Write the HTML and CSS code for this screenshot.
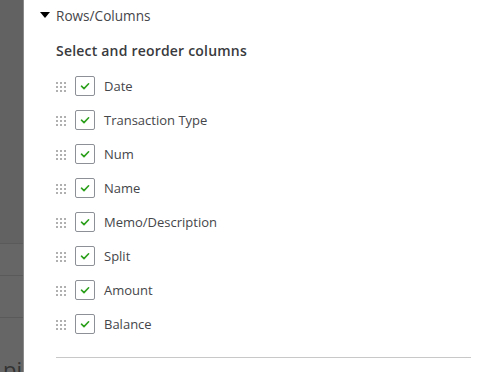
FILE: index.html
```html
<!DOCTYPE html>
<html lang="en">
<head>
    <meta charset="UTF-8">
    <title>Customize report - Rows/Columns</title>
    <link rel="stylesheet" href="styles.css">
</head>
<body>

<!-- Dimmed page behind the drawer -->
<div class="backdrop">
    <div class="backdrop-row top"></div>
    <div class="backdrop-row"></div>
    <div class="backdrop-row"></div>
    <div class="backdrop-row last"><span class="backdrop-text">pi</span></div>
</div>

<!-- Drawer -->
<div class="drawer">
    <div class="section-toggle">
        <span class="caret"></span>
        <span>Rows/Columns</span>
    </div>

    <h3 class="section-title">Select and reorder columns</h3>

    <ul class="column-list" id="column-list"></ul>

    <hr class="divider">
</div>

<script>
// Columns shown in the report
const columns = ['Date', 'Transaction Type', 'Num', 'Name', 'Memo/Description', 'Split', 'Amount', 'Balance'];

const list = document.getElementById('column-list');
columns.forEach(name => {
    const item = document.createElement('li');
    item.className = 'column-item';
    item.innerHTML = `
        <span class="drag-handle"><i></i><i></i><i></i><i></i><i></i><i></i><i></i><i></i><i></i></span>
        <span class="checkbox">
            <svg width="12" height="10" viewBox="0 0 12 10"><path d="M2.5 5.2 L5 7.6 L9.6 2.8" fill="none" stroke="#2ca01c" stroke-width="1.6" stroke-linecap="round" stroke-linejoin="round"/></svg>
        </span>
        <span class="column-name">${name}</span>
    `;
    list.appendChild(item);
});
</script>

</body>
</html>
```

FILE: styles.css
```css
body {
    margin: 0;
    padding: 0;
    font-family: 'Open Sans', sans-serif;
    color: #45464a;
    display: flex;
    height: 372px;
    overflow: hidden;
    background-color: white;
}

/* Dimmed page on the left */
.backdrop {
    width: 23px;
    flex-shrink: 0;
    background-color: #666666;
    display: flex;
    flex-direction: column;
    border-right: 1px solid #8a8a8a;
}

.backdrop-row {
    height: 31px;
    border-bottom: 1px solid #5a5a5a;
}

.backdrop-row.top {
    height: 243px;
    background-color: #626262;
}

.backdrop-row:nth-child(3) {
    height: 41px;
}

.backdrop-row.last {
    height: auto;
    flex: 1;
    border-bottom: none;
    padding-top: 40px;
    overflow: hidden;
}

.backdrop-text {
    font-size: 22px;
    line-height: 22px;
    color: #333;
    margin-left: 3px;
}

/* Drawer */
.drawer {
    flex: 1;
    padding: 4px 29px 0 32px;
}

.section-toggle {
    display: flex;
    align-items: center;
    gap: 6px;
    font-size: 13.6px;
    height: 22px;
    margin-left: -16px;
}

.caret {
    width: 0;
    height: 0;
    border-left: 5px solid transparent;
    border-right: 5px solid transparent;
    border-top: 6px solid #000;
}

.section-title {
    font-size: 14px;
    font-weight: 600;
    letter-spacing: 0.2px;
    margin: 15px 0 9px 0;
    color: #393a3d;
}

.column-list {
    list-style: none;
    margin: 0;
    padding: 0;
}

.column-item {
    display: flex;
    align-items: center;
    height: 34px;
    font-size: 13px;
}

.drag-handle {
    display: grid;
    grid-template-columns: repeat(3, 2px);
    gap: 2px;
    width: 10px;
    margin: 1px 9px 0 0;
}

.drag-handle i {
    width: 2px;
    height: 2px;
    background-color: #b0b0b0;
}

.checkbox {
    width: 18px;
    height: 18px;
    border: 1px solid #8d9096;
    border-radius: 2px;
    display: flex;
    align-items: center;
    justify-content: center;
    margin-right: 9px;
}

.divider {
    border: none;
    border-top: 1px solid #c8c8c8;
    margin: 16px 0 0 0;
}
```
